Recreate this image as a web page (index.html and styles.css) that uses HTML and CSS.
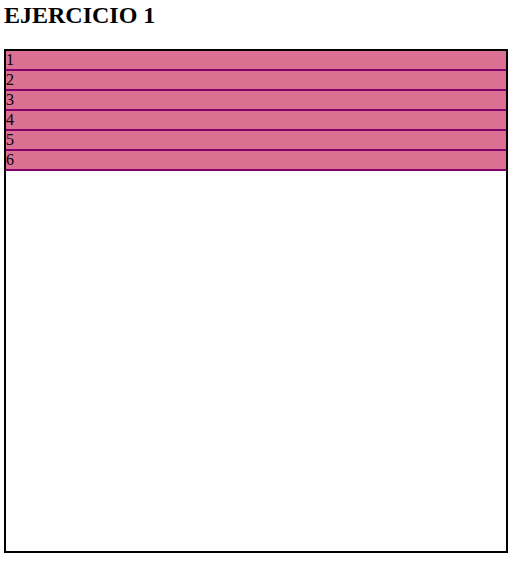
FILE: index.html
```html
<!DOCTYPE html>
<html lang="es">
<head>
<meta charset="utf-8">
<title>Ejercicio 1</title>
<link rel="stylesheet" href="styles.css">
</head>
<body>
<h2 class="title">EJERCICIO 1</h2>
<div class="box">
  <div class="item">1</div>
  <div class="item">2</div>
  <div class="item">3</div>
  <div class="item">4</div>
  <div class="item">5</div>
  <div class="item">6</div>
</div>
</body>
</html>
```
FILE: styles.css
```css
body {
  margin: 0;
  padding: 2px 4px;
  font-family: "Liberation Serif", "Times New Roman", serif;
  background: #ffffff;
  color: #000000;
}
.title {
  margin: 0 0 20px 0;
  font-size: 24px;
  font-weight: bold;
  line-height: 27px;
}
.box {
  width: 500px;
  height: 500px;
  border: 2px solid #000000;
  display: flex;
  flex-direction: column;
}
.item {
  height: 18px;
  line-height: 18px;
  font-size: 16px;
  background: #db7093;
  border-bottom: 2px solid #800068;
  color: #000000;
}
```
